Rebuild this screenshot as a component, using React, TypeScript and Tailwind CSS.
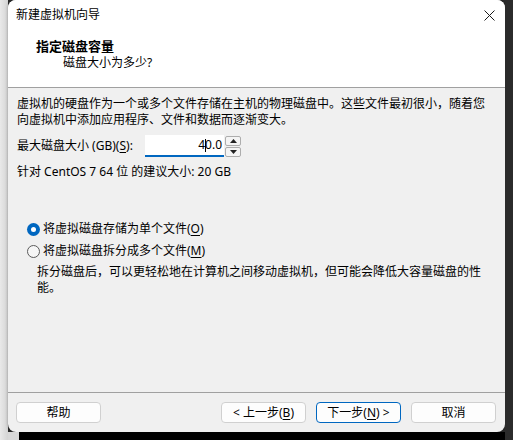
import React from 'react'

const font = "font-['Noto_Sans','Noto_Sans_CJK_SC','Microsoft_YaHei',sans-serif]"

function Key({ k }: { k: string }) {
  return <span className="underline underline-offset-2">{k}</span>
}

function Button({ children, primary }: { children: React.ReactNode; primary?: boolean }) {
  return (
    <div
      className={`flex h-[21px] w-[85px] items-center justify-center rounded-[4px] border bg-[#fdfdfd] text-[12px] leading-[16px] text-black ${
        primary ? 'border-[#0067c0]' : 'border-[#d0d0d0]'
      }`}
    >
      {children}
    </div>
  )
}

function Radio({ checked, children }: { checked?: boolean; children: React.ReactNode }) {
  return (
    <div className="flex h-[16px] items-center gap-[3px] pl-[10px]">
      {checked ? (
        <div className="flex h-[13px] w-[13px] items-center justify-center rounded-full bg-[#0067c0]">
          <div className="h-[5px] w-[5px] rounded-full bg-white" />
        </div>
      ) : (
        <div className="h-[13px] w-[13px] rounded-full border border-[#5a5a5a] bg-[#f6f6f6]" />
      )}
      <span>{children}</span>
    </div>
  )
}

export default function App() {
  return (
    <div className={`flex h-[440px] w-[513px] overflow-hidden bg-[#2b2b2b] ${font} text-[12px] leading-[16px] text-black`}>
      {/* desktop strip left */}
      <div className="h-full w-[8px] bg-gradient-to-r from-[#e9e9e9] to-[#d4d4d4]" />

      <div className="flex w-[497px] flex-col">
        {/* wizard window */}
        <div className="flex h-[432px] flex-col overflow-hidden rounded-[8px] bg-[#f0f0f0] shadow-[0_0_3px_rgba(0,0,0,0.35)]">
          <div className="flex h-[87px] flex-col bg-white">
            {/* title bar */}
            <div className="flex h-[30px] items-center justify-between pl-[8px] pr-[10px]">
              <span>新建虚拟机向导</span>
              <svg width="11" height="11" viewBox="0 0 11 11">
                <path d="M0.5 0.5 L10.5 10.5 M10.5 0.5 L0.5 10.5" stroke="#1a1a1a" strokeWidth="1" />
              </svg>
            </div>
            <div className="pl-[28px] pt-[8px] text-[13px] font-bold">指定磁盘容量</div>
            <div className="mt-[1px] pl-[55px]">磁盘大小为多少?</div>
          </div>
          <div className="h-px bg-[#a0a0a0]" />

          {/* body */}
          <div className="flex flex-1 flex-col px-[9px] pt-[8px]">
            <p>
              虚拟机的硬盘作为一个或多个文件存储在主机的物理磁盘中。这些文件最初很小，随着您
              <br />
              向虚拟机中添加应用程序、文件和数据而逐渐变大。
            </p>

            <div className="mt-[7px] flex h-[22px] items-center">
              <span className="w-[128px]">
                最大磁盘大小 (GB)(<Key k="S" />):
              </span>
              <div className="flex h-[22px] w-[79px] items-center justify-end border-b-2 border-[#0067c0] bg-white pr-[2px]">
                <span>4</span>
                <span className="mx-[-0.5px] inline-block h-[13px] w-px bg-black" />
                <span>0.0</span>
              </div>
              <div className="ml-[1px] flex h-[21px] w-[16px] flex-col gap-[1px]">
                <div className="flex h-[10px] items-center justify-center rounded-[2px] border border-[#adadad] bg-[#f4f4f4]">
                  <svg width="7" height="4" viewBox="0 0 7 4">
                    <path d="M3.5 0 L7 4 L0 4 Z" fill="#222" />
                  </svg>
                </div>
                <div className="flex h-[10px] items-center justify-center rounded-[2px] border border-[#adadad] bg-[#f4f4f4]">
                  <svg width="7" height="4" viewBox="0 0 7 4">
                    <path d="M0 0 L7 0 L3.5 4 Z" fill="#222" />
                  </svg>
                </div>
              </div>
            </div>

            <p className="mt-[7px]">针对 CentOS 7 64 位 的建议大小: 20 GB</p>

            <div className="mt-[41px]">
              <Radio checked>
                将虚拟磁盘存储为单个文件(<Key k="O" />)
              </Radio>
            </div>
            <div className="mt-[6px]">
              <Radio>
                将虚拟磁盘拆分成多个文件(<Key k="M" />)
              </Radio>
            </div>
            <p className="mt-[5px] pl-[20px]">
              拆分磁盘后，可以更轻松地在计算机之间移动虚拟机，但可能会降低大容量磁盘的性
              <br />
              能。
            </p>
          </div>

          {/* footer */}
          <div className="h-px bg-[#a0a0a0]" />
          <div className="flex items-center justify-between pb-[9px] pl-[8px] pr-[9px] pt-[9px]">
            <Button>帮助</Button>
            <div className="flex gap-[10px]">
              <Button>
                &lt; 上一步(<Key k="B" />)
              </Button>
              <Button primary>
                下一步(<Key k="N" />) &gt;
              </Button>
              <Button>取消</Button>
            </div>
          </div>
        </div>
        <div className="flex flex-1">
          <div className="w-[11px] bg-[#d8d8d8]" />
          <div className="flex-1 bg-black" />
        </div>
      </div>

      <div className="flex-1 bg-[#2b2b2b]" />
    </div>
  )
}
